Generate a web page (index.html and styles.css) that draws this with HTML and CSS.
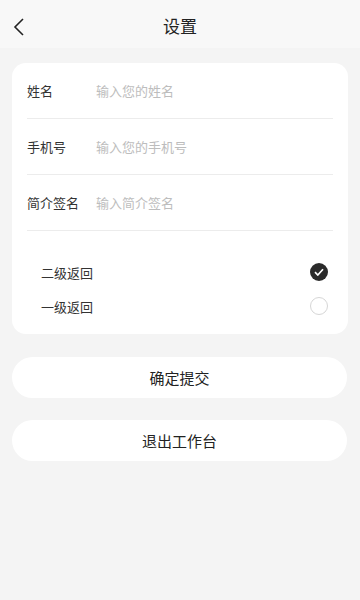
FILE: index.html
```html
<!DOCTYPE html>
<html lang="zh">
<head>
    <meta charset="UTF-8">
    <meta name="viewport" content="width=device-width, initial-scale=1.0">
    <title>设置</title>
    <link rel="stylesheet" href="styles.css">
</head>
<body>
    <div class="topbar">
        <span class="back">
            <svg width="12" height="18" viewBox="0 0 12 18"><path d="M10 1 L2 9 L10 17" fill="none" stroke="#222" stroke-width="1.6"/></svg>
        </span>
        <div class="title">设置</div>
    </div>

    <div class="card">
        <div class="field">
            <label>姓名</label>
            <input type="text" placeholder="输入您的姓名">
        </div>
        <div class="field">
            <label>手机号</label>
            <input type="text" placeholder="输入您的手机号">
        </div>
        <div class="field">
            <label>简介签名</label>
            <input type="text" placeholder="输入简介签名">
        </div>

        <div class="options">
            <div class="option">
                <span>二级返回</span>
                <span class="radio checked">
                    <svg width="10" height="8" viewBox="0 0 10 8"><path d="M1 4.2 L3.8 7 L9 1.2" fill="none" stroke="#fff" stroke-width="1.7"/></svg>
                </span>
            </div>
            <div class="option">
                <span>一级返回</span>
                <span class="radio"></span>
            </div>
        </div>
    </div>

    <button class="btn">确定提交</button>
    <button class="btn">退出工作台</button>
</body>
</html>
```
FILE: styles.css
```css
body {
    font-family: "Noto Sans CJK SC", "Noto Sans", sans-serif;
    margin: 0;
    padding: 0;
    background: #f4f4f4;
    color: #333;
    min-height: 600px;
}

.topbar {
    position: relative;
    height: 48px;
    background: #f8f8f8;
    display: flex;
    align-items: center;
    justify-content: center;
}

.back {
    position: absolute;
    left: 13px;
    top: 18px;
}

.back svg {
    display: block;
}

.title {
    font-size: 17px;
    color: #222;
    margin-top: 2px;
}

.card {
    margin: 15px 12px 0;
    background: #fff;
    border-radius: 14px;
    padding: 0 15px 11px;
}

.field {
    height: 55px;
    display: flex;
    align-items: center;
    border-bottom: 1px solid #ececec;
}

.field label {
    width: 69px;
    font-size: 13px;
    color: #333;
}

.field input {
    flex: 1;
    border: none;
    outline: none;
    font-family: inherit;
    font-size: 13px;
    padding: 0;
    color: #333;
}

.field input::placeholder {
    color: #bdbdbd;
}

.options {
    padding: 24px 5px 0 14px;
}

.option {
    height: 34px;
    display: flex;
    align-items: center;
    justify-content: space-between;
    font-size: 13px;
    color: #333;
}

.radio {
    width: 16px;
    height: 16px;
    border-radius: 50%;
    border: 1px solid #d6d6d6;
    display: flex;
    align-items: center;
    justify-content: center;
}

.radio.checked {
    width: 18px;
    height: 18px;
    border: none;
    background: #2b2b2b;
}

.btn {
    display: block;
    width: 335px;
    height: 41px;
    margin: 23px 12px 0;
    border: none;
    border-radius: 21px;
    background: #fff;
    font-family: inherit;
    font-size: 15px;
    color: #222;
}

.btn + .btn {
    margin-top: 22px;
}
```
